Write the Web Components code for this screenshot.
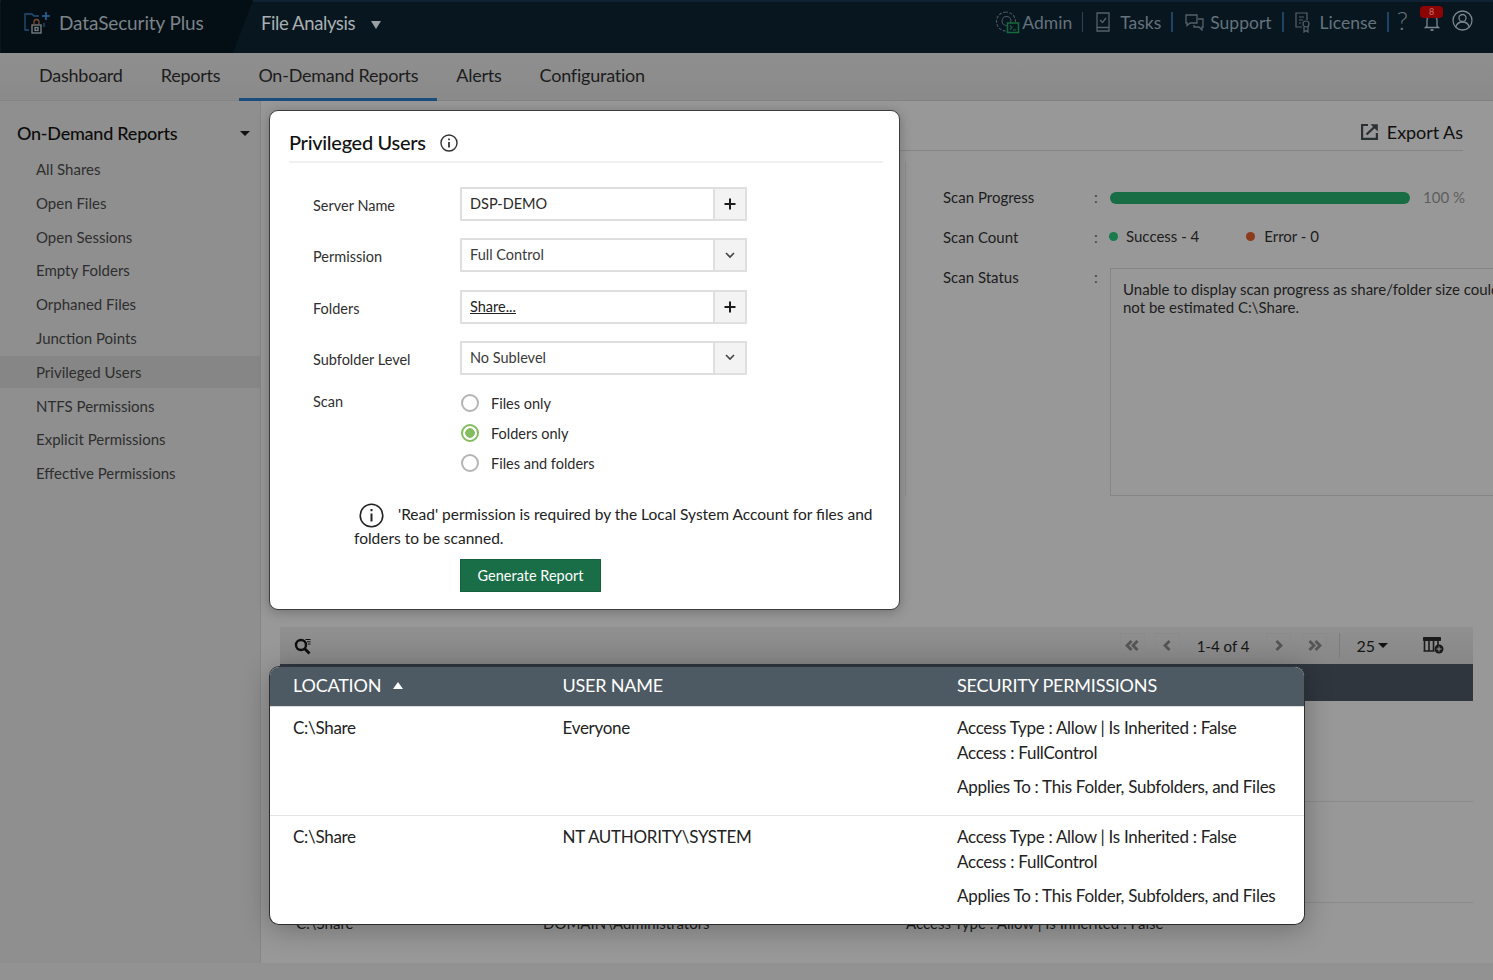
<!DOCTYPE html>
<html>
<head>
<meta charset="utf-8">
<title>DataSecurity Plus</title>
<style>
  html, body { margin: 0; height: 100%; overflow: hidden; background: #929292; }
  body { font-family: Lato, "Liberation Sans", sans-serif; color: #222; }
</style>
</head>
<body>
<ds-app>
  <ds-topbar slot="top"></ds-topbar>
  <ds-subnav slot="top"></ds-subnav>
  <ds-sidebar slot="side"></ds-sidebar>
  <ds-main slot="main"></ds-main>
  <ds-dialog slot="over"></ds-dialog>
  <ds-card slot="over"></ds-card>
</ds-app>

<script>
function register(name, html) {
  const template = document.createElement("template");
  template.innerHTML = html;
  customElements.define(name, class extends HTMLElement {
    constructor() {
      super();
      this.attachShadow({ mode: "open" });
      this.shadowRoot.appendChild(template.content.cloneNode(true));
    }
  });
}

register("ds-app", `
<style>
  :host { display: block; position: relative; width: 1493px; height: 980px; overflow: hidden; }
  .body { display: flex; height: 862px; }
</style>
<slot name="top"></slot>
<div class="body"><slot name="side"></slot><slot name="main"></slot></div>
<slot name="over"></slot>
`);

register("ds-topbar", `
<style>
  :host { display: flex; height: 53px; box-sizing: border-box; position: relative; background: #07161f; border-top: 2px solid #0e2234; }
  .brand { width: 252px; margin-top: -2px; margin-left: 1px; height: 53px; box-sizing: border-box; background: #030f15; display: flex; align-items: center; gap: 7px; padding: 0 0 8px 23px;
    clip-path: polygon(0 0, 100% 0, 92% 100%, 0 100%); color: #7c8388; font-size: 19px; letter-spacing: -.12px; }
  .brand svg { margin-top: 1px; }
  .module { margin-left: 8px; display: flex; align-items: center; gap: 16px; color: #a9aeb2; font-size: 18.500px; letter-spacing: -.4px; height: 42px; }
  .caret { width: 0; height: 0; border-left: 5.500px solid transparent; border-right: 5.500px solid transparent; border-top: 8px solid #9aa0a4; margin-top: 4px; }
  .right { margin-left: auto; display: flex; align-items: center; height: 40px; padding-right: 20px; color: #66727c; font-size: 17.500px; }
  .item { display: flex; align-items: center; gap: 6px; }
  .sep { width: 2px; height: 20px; background: #1c4466; margin: 0 12px 0 10px; }
  .sep.dim { width: 1px; background: #33424d; }
  svg { display: block; flex: none; }
  .bell { position: relative; margin-left: 16px; }
  .badge { position: absolute; left: -4px; top: -7px; width: 23px; height: 12px; border-radius: 4px; background: #8c0404; color: #c9706c; font-size: 9px; line-height: 12px; text-align: center; }
  .q { color: #66727c; font-size: 26px; font-weight: 300; line-height: 1; margin-top: -5px; }
</style>
<div class="brand">
  <svg width="28" height="24" viewBox="0 0 28 24" fill="none" stroke-width="1.3">
    <path d="M1 12V3h7l2 2h5M20 12v4M1 12v7h4" stroke="#24507a"/>
    <path d="M22 1v8M18 5h8" stroke="#2c659b" stroke-width="1.6"/>
    <rect x="8" y="14" width="9" height="8" stroke="#7c8388"/>
    <path d="M10 14v-3a2.5 2.5 0 0 1 5 0v3" stroke="#7a4a30"/>
    <rect x="11" y="16.5" width="3" height="3" stroke="#7c8388"/>
  </svg>
  DataSecurity Plus
</div>
<div class="module">File Analysis <span class="caret"></span></div>
<div class="right">
  <div class="item" style="gap:2px">
    <svg width="25" height="24" viewBox="0 0 25 24" fill="none" stroke="#4c565e" stroke-width="1.1">
      <path stroke-dasharray="3 1.4" d="M11 2a9.500 9.500 0 1 0 0 19a9.500 9.500 0 1 0 0-19z"/>
      <circle cx="11.500" cy="11" r="4.500"/>
      <rect x="12.500" y="13" width="11" height="9.500" fill="#07161f" stroke="#146b3c" stroke-width="1.500"/>
      <path d="M15 15.500l2 2-2 2M18 20h3" stroke="#146b3c"/>
    </svg>
    Admin
  </div>
  <span class="sep dim"></span>
  <div class="item" style="gap:9px">
    <svg width="16" height="20" viewBox="0 0 16 20" fill="none" stroke="#56616a" stroke-width="1.300">
      <path d="M2 1h12v18H2zM2 15.500h12"/><path d="M5 8l2.500 2.500L11 6"/>
    </svg>
    Tasks
  </div>
  <span class="sep"></span>
  <div class="item">
    <svg width="19" height="18" viewBox="0 0 19 18" fill="none" stroke="#56616a" stroke-width="1.300">
      <path d="M1 2h11v8H5l-3 2.500V10H1z"/><path d="M13 6h5v8h-1v3l-3-3h-5v-2"/>
    </svg>
    Support
  </div>
  <span class="sep" style="margin-right:11px"></span>
  <div class="item" style="gap:9px">
    <svg width="16" height="21" viewBox="0 0 16 21" fill="none" stroke="#56616a" stroke-width="1.200">
      <path d="M7 15H1V1h11v7"/><path d="M4 5h5M4 8h4M4 11h2"/><circle cx="11" cy="12" r="3"/><path d="M9 15v5l2-1.500 2 1.500v-5"/>
    </svg>
    License
  </div>
  <span class="sep" style="margin-right:8px"></span>
  <span class="q">?</span>
  <div class="bell">
    <svg width="16" height="19" viewBox="0 0 16 19" fill="none" stroke="#7a858d" stroke-width="1.300"><path d="M3 13V7a5 5 0 0 1 10 0v6l1.500 1.500h-13z"/><path d="M6.500 17h3" stroke-width="1.800"/></svg>
    <span class="badge">8</span>
  </div>
  <svg style="margin-left:12px;margin-top:-4px" width="21" height="21" viewBox="0 0 21 21" fill="none" stroke="#7a858d" stroke-width="1.300">
    <circle cx="10.500" cy="10.500" r="9.500"/><circle cx="10.500" cy="8" r="3.500"/><path d="M3.800 17c1-3.500 3.500-5 6.700-5s5.700 1.500 6.700 5"/>
  </svg>
</div>
`);

register("ds-subnav", `
<style>
  :host { display: flex; height: 48px; box-sizing: border-box; padding-left: 20px; background: linear-gradient(#8f8f8f, #8a8a8a); font-size: 18px; letter-spacing: -.23px; color: #1c1c1c; border-bottom: 1px solid #838383; }
  a { padding: 0 19px; line-height: 45px; height: 48px; box-sizing: border-box; }
  a.on { border-bottom: 3px solid #1a4c80; }
</style>
<a>Dashboard</a><a>Reports</a><a class="on">On-Demand Reports</a><a>Alerts</a><a>Configuration</a>
`);

register("ds-sidebar", `
<style>
  :host { display: block; width: 260px; flex: none; height: 862px; background: #8f8f8f; border-right: 1px solid #868686; box-sizing: content-box; }
  h2 { margin: 0; padding: 16px 10px 0 17px; height: 32px; font-size: 18px; font-weight: 500; letter-spacing: -.24px; line-height: 26px; color: #0c0c0c; display: flex; justify-content: space-between; align-items: center; }
  h2 i { width: 0; height: 0; border-left: 5px solid transparent; border-right: 5px solid transparent; border-top: 5px solid #111; }
  ul { list-style: none; margin: 0; padding: 4px 0 0; }
  li { height: 33.800px; line-height: 33px; padding-left: 36px; font-size: 15px; color: #2e2e2e; }
  li.on { background: linear-gradient(#868686, #868686) no-repeat 0 0 / 100% 32px; }
</style>
<h2>On-Demand Reports <i></i></h2>
<ul>
  <li>All Shares</li>
  <li>Open Files</li>
  <li>Open Sessions</li>
  <li>Empty Folders</li>
  <li>Orphaned Files</li>
  <li>Junction Points</li>
  <li class="on">Privileged Users</li>
  <li>NTFS Permissions</li>
  <li>Explicit Permissions</li>
  <li>Effective Permissions</li>
</ul>
`);

register("ds-main", `
<style>
  :host { display: block; width: 1232px; flex: none; height: 862px; background: #989898; padding: 0 20px 0 19px; box-sizing: border-box; overflow: hidden; }
  .head { height: 50px; box-sizing: border-box; margin-right: 10px; padding-top: 12px; border-bottom: 1px solid #858585; display: flex; justify-content: flex-end; align-items: center; gap: 8px; font-size: 18px; letter-spacing: -.05px; color: #0f0f0f; }
  .scan { height: 335px; margin: 10px 0 0 625px; border-left: 1px solid #8c8c8c; box-sizing: border-box; padding: 27px 0 0 37px; font-size: 15px; color: #1d1d1d; width: 700px; }
  .row { display: flex; }
  .k { width: 151px; }
  .c { width: 16px; color: #444; }
  .bar { width: 300px; height: 12px; border-radius: 6px; background: #196d45; margin-top: 4px; }
  .pct { margin-left: 13px; color: #5e5e5e; font-size: 15px; }
  .val { margin-top: -1px; }
  .dot { width: 9px; height: 9px; border-radius: 50%; background: #1a7a4c; margin: 4px 8px 0 -1px; }
  .dot.err { background: #8a3c1c; margin-left: 47px; margin-right: 9px; }
  .box { width: 410px; height: 228px; box-sizing: border-box; border: 1px solid #858585; padding: 11px 12px; line-height: 18px; font-size: 15px; flex: none; }
  .tools { margin-top: 131px; height: 37px; background: linear-gradient(#909090, #878787); display: flex; align-items: center; color: #151515; font-size: 16px; }
  .tools .s { margin-left: 14px; margin-right: auto; }
  .pg { width: 25px; height: 25px; box-sizing: border-box; border: 1px solid #8a8a8a; display: flex; align-items: center; justify-content: center; }
  .n { margin: 0 17px; font-size: 15px; }
  .v { width: 1px; height: 25px; background: #7c7c7c; margin: 0 16px 0 12px; }
  .cnt { display: flex; align-items: center; gap: 3px; margin-right: 35px; }
  .cnt i { width: 0; height: 0; border-left: 5px solid transparent; border-right: 5px solid transparent; border-top: 5px solid #111; }
  .thead { height: 37px; background: #2f363e; }
  .tr { height: 100px; border-bottom: 1px solid #8a8a8a; }
  .last { display: flex; font-size: 15px; line-height: 20px; padding-top: 10px; color: #1a1a1a; }
  .last span:nth-child(1) { margin-left: 16px; width: 247px; }
  .last span:nth-child(2) { width: 363px; }
  svg { display: block; flex: none; }
</style>
<div class="head">
  <svg width="18" height="17" viewBox="0 0 18 17" fill="none" stroke="#2a3135" stroke-width="2.200">
    <path d="M7 2H1.100v13.900h14.800V10"/><path d="M5.500 11.500L14 3.500" stroke-width="2.400"/><path d="M9.500 1.200h7.300v7.300z" fill="#2a3135" stroke="none"/>
  </svg>
  Export As
</div>
<div class="scan">
  <div class="row" style="height:40px"><span class="k">Scan Progress</span><span class="c">:</span><span class="bar"></span><span class="pct">100 %</span></div>
  <div class="row" style="height:40px"><span class="k">Scan Count</span><span class="c">:</span><span class="dot"></span><span class="val">Success - 4</span><span class="dot err"></span><span class="val">Error - 0</span></div>
  <div class="row"><span class="k">Scan Status</span><span class="c">:</span><div class="box">Unable to display scan progress as share/folder size could not be estimated C:\\Share.</div></div>
</div>
<div class="tools">
  <svg class="s" width="18" height="18" viewBox="0 0 18 18" fill="none" stroke="#0e0e0e" stroke-width="2.400">
    <circle cx="7" cy="8" r="5"/><path d="M10.500 11.500l5 5" stroke-width="2.800"/><path d="M11.500 2.500h5M13 4.800h3.500M14 7h2.500" stroke-width="1"/>
  </svg>
  <span class="pg"><svg width="14" height="11" viewBox="0 0 14 11" fill="none" stroke="#555" stroke-width="2.800"><path d="M6.500 1L2 5.500 6.500 10M12.500 1L8 5.500l4.500 4.500"/></svg></span>
  <span class="pg" style="margin-left:10px"><svg width="8" height="11" viewBox="0 0 8 11" fill="none" stroke="#555" stroke-width="2.800"><path d="M6.500 1L2 5.500 6.500 10"/></svg></span>
  <span class="n">1-4 of 4</span>
  <span class="pg"><svg width="8" height="11" viewBox="0 0 8 11" fill="none" stroke="#555" stroke-width="2.800"><path d="M1.500 1L6 5.500 1.500 10"/></svg></span>
  <span class="pg" style="margin-left:11px"><svg width="14" height="11" viewBox="0 0 14 11" fill="none" stroke="#555" stroke-width="2.800"><path d="M1.500 1L6 5.500 1.500 10M7.500 1L12 5.500 7.500 10"/></svg></span>
  <span class="v"></span>
  <span class="cnt">25 <i></i></span>
  <svg style="margin-right:29px" width="21" height="17" viewBox="0 0 21 17" fill="none" stroke="#1b1b1b">
    <path d="M.5.500h17v3H.5z" fill="#1b1b1b"/><path d="M1.500 3v11M6 3v11M10.500 3v11M15 3v6M.5 14h11" stroke-width="1.600"/>
    <circle cx="16" cy="12" r="4.500" fill="#1b1b1b" stroke="none"/><path d="M16 9.500v5M13.500 12h5" stroke="#989898"/>
  </svg>
</div>
<div class="thead"></div>
<div class="tr"></div>
<div class="tr"></div>
<div class="last"><span>C:\\Share</span><span>DOMAIN\\Administrators</span><span>Access Type : Allow | Is Inherited : False</span></div>
`);

register("ds-field", `
<style>
  :host { display: flex; margin-bottom: 17.330px; }
  label { width: 171px; padding: 10px 0 0 24px; box-sizing: border-box; font-size: 14.500px; color: #2f2f2f; }
</style>
<label><slot name="label"></slot></label>
<slot></slot>
`);

register("ds-picker", `
<style>
  :host { display: flex; width: 287px; height: 34px; box-sizing: border-box; border: 2px solid #dfdfdf; font-size: 14.500px; color: #3a3a3a; }
  .v { flex: 1; padding-left: 8px; line-height: 29px; }
  .b { width: 32px; box-sizing: border-box; background: #f3f3f3; border-left: 2px solid #dfdfdf; display: flex; align-items: center; justify-content: center; }
</style>
<div class="v"><slot></slot></div>
<div class="b"><slot name="btn"></slot></div>
`);

register("ds-radio", `
<style>
  :host { display: flex; align-items: center; height: 30px; font-size: 14.500px; color: #2a2a2a; gap: 12px; margin-left: 1px; }
  i { width: 18px; height: 18px; box-sizing: border-box; border: 2px solid #b4b4b4; border-radius: 50%; display: block; background: #fff; }
  :host([checked]) i { border-color: #84bd5f; background: radial-gradient(circle, #84bd5f 0 4.500px, #fff 5px); }
</style>
<i></i><slot></slot>
`);

const plus = '<svg slot="btn" width="12" height="12" viewBox="0 0 12 12"><path d="M6 .5v11M.5 6h11" stroke="#1c1c1c" stroke-width="2"/></svg>';
const chev = '<svg slot="btn" width="10" height="7" viewBox="0 0 10 7" fill="none"><path d="M1 1l4 4 4-4" stroke="#444" stroke-width="1.600"/></svg>';

register("ds-dialog", `
<style>
  :host { position: absolute; left: 269px; top: 110px; width: 631px; height: 500px; box-sizing: border-box; background: #fff; border: 1px solid #3c3c3c; border-radius: 9px; box-shadow: 0 2px 12px rgba(0,0,0,.25); padding: 1px 16px 0 19px; color: #222; }
  .title { height: 51px; box-sizing: border-box; border-bottom: 2px solid #f1f1f1; display: flex; align-items: center; gap: 14px; font-size: 20px; letter-spacing: -.3px; color: #111; padding-top: 11px; font-weight: 500; margin-bottom: 24px; }
  .title svg { margin-top: 2px; }
  .scan { display: flex; margin-top: -4px; }
  .scan label { width: 171px; padding: 5px 0 0 24px; box-sizing: border-box; font-size: 14.500px; color: #2f2f2f; }
  .note { margin: 24px 7px 0 65px; font-size: 15.500px; line-height: 24px; color: #222; }
  .note svg { display: inline-block; vertical-align: middle; margin: -4px 14px -2px 5px; }
  button { display: block; margin: 9px 0 0 171px; width: 141px; height: 33px; border: 1px solid #16603d; background: #1a6e47; color: #fff; font: 14.500px Lato, sans-serif; padding: 0; }
  u { color: #222; }
</style>
<div class="title">Privileged Users
  <svg width="18" height="18" viewBox="0 0 18 18" fill="none" stroke="#333" stroke-width="1.400"><circle cx="9" cy="9" r="8"/><path d="M9 8v5.500" stroke-width="1.800"/><path d="M9 4.500v1.800" stroke-width="1.800"/></svg>
</div>
<ds-field><span slot="label">Server Name</span><ds-picker><span style="color:#2a2a2a">DSP-DEMO</span>${plus}</ds-picker></ds-field>
<ds-field><span slot="label">Permission</span><ds-picker>Full Control${chev}</ds-picker></ds-field>
<ds-field><span slot="label">Folders</span><ds-picker><u>Share...</u>${plus}</ds-picker></ds-field>
<ds-field><span slot="label">Subfolder Level</span><ds-picker>No Sublevel${chev}</ds-picker></ds-field>
<div class="scan">
  <label>Scan</label>
  <div>
    <ds-radio>Files only</ds-radio>
    <ds-radio checked>Folders only</ds-radio>
    <ds-radio>Files and folders</ds-radio>
  </div>
</div>
<div class="note">
  <svg width="25" height="25" viewBox="0 0 25 25" fill="none" stroke="#222" stroke-width="1.600"><circle cx="12.500" cy="12.500" r="11.300"/><path d="M12.500 10.500v8" stroke-width="2"/><path d="M12.500 6v2.200" stroke-width="2"/></svg>'Read' permission is required by the Local System Account for files and folders to be scanned.
</div>
<button>Generate Report</button>
`);

register("ds-perm-row", `
<style>
  :host { display: grid; grid-template-columns: 269.500px 394.500px 1fr; padding: 8px 0 0 23px; height: 109px; box-sizing: border-box; font-size: 17px; letter-spacing: -.29px; line-height: 25px; color: #222; }
  :host(:not(:last-child)) { border-bottom: 1px solid #e4e4e4; }
  .p div:last-child { margin-top: 9px; }
</style>
<div><slot name="loc"></slot></div>
<div><slot name="user"></slot></div>
<div class="p">
  <div>Access Type : Allow | Is Inherited : False</div>
  <div>Access : FullControl</div>
  <div>Applies To : This Folder, Subfolders, and Files</div>
</div>
`);

register("ds-card", `
<style>
  :host { position: absolute; left: 269px; top: 666px; width: 1036px; height: 259px; box-sizing: border-box; background: #fff; border: 1px solid #2e2e2e; border-top-color: #2e343a; border-radius: 10px; box-shadow: 0 4px 28px rgba(0,0,0,.28); overflow: hidden; }
  .h { display: grid; grid-template-columns: 269.500px 394.500px 1fr; height: 39px; padding-left: 23px; background: #4d5a63; color: #fff; font-size: 18px; letter-spacing: -.2px; line-height: 37px; border-bottom: 1px solid #d8dcde; }
  .h i { display: inline-block; width: 0; height: 0; margin-left: 7px; vertical-align: 3px; border-left: 5px solid transparent; border-right: 5px solid transparent; border-bottom: 7px solid #fff; }
</style>
<div class="h"><div>LOCATION <i></i></div><div>USER NAME</div><div>SECURITY PERMISSIONS</div></div>
<ds-perm-row><span slot="loc">C:\\Share</span><span slot="user">Everyone</span></ds-perm-row>
<ds-perm-row><span slot="loc">C:\\Share</span><span slot="user">NT AUTHORITY\\SYSTEM</span></ds-perm-row>
`);
</script>
</body>
</html>
